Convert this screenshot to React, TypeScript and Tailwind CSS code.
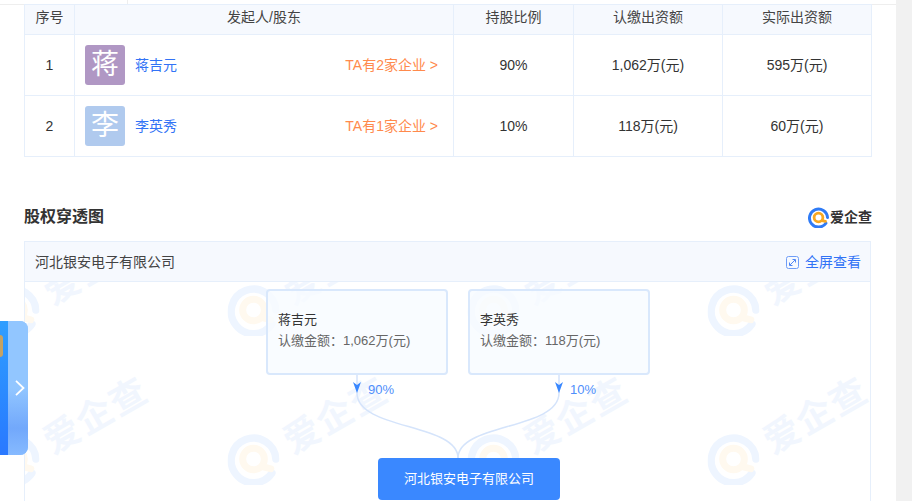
const FONT = "font-['Liberation_Sans','Noto_Sans_CJK_SC',sans-serif]";

function LogoMark({ size, faded }: { size: number; faded?: boolean }) {
  return (
    <svg width={size} height={size} viewBox="0 0 24 24" fill="none">
      <path d="M20.500 18.500A10.300 10.300 0 1 1 22.300 12" stroke={faded ? "#eef5ff" : "#2f7bf6"} strokeWidth="3.4" strokeLinecap="round" />
      <circle cx="12" cy="12" r="5" stroke={faded ? "#fff9ef" : "#f7a823"} strokeWidth="3.200" />
      <path d="M16 15.500L20 16.500" stroke={faded ? "#fff9ef" : "#f7a823"} strokeWidth="3.200" strokeLinecap="round" />
    </svg>
  );
}

function Watermark({ x, y }: { x: number; y: number }) {
  return (
    <div className="absolute flex items-center gap-[10px] -rotate-[30deg] origin-left" style={{ left: x, top: y }}>
      <div className="rotate-[30deg]">
        <LogoMark size={52} faded />
      </div>
      <span className="mt-[8px] text-[36px] leading-none font-bold text-[#f1f6fe] tracking-[2px] whitespace-nowrap">爱企查</span>
    </div>
  );
}

const rows = [
  { n: "1", ch: "蒋", name: "蒋吉元", color: "bg-[#b097c4]", ta: "TA有2家企业 >", pct: "90%", a: "1,062万(元)", b: "595万(元)" },
  { n: "2", ch: "李", name: "李英秀", color: "bg-[#b0caee]", ta: "TA有1家企业 >", pct: "10%", a: "118万(元)", b: "60万(元)" },
];

const marks = [
  [-12, 0], [228, 0], [468, 0], [708, 0],
  [-12, 149], [228, 149], [468, 149], [708, 149],
];

function Holder({ name, amount }: { name: string; amount: string }) {
  return (
    <div className="w-[182px] h-[86px] rounded-[4px] border-2 border-[#d9e8fc] bg-[#f8fbff]/80 pl-[10px] pt-[18px] text-[13px] text-[#333]">
      <div className="leading-[21px]">{name}</div>
      <div className="leading-[21px] text-[#666] whitespace-nowrap">认缴金额：{amount}</div>
    </div>
  );
}

export default function App() {
  const th = "border border-[#e6effb] bg-[#f6f9fe] font-normal text-[#444] h-[30px] pb-[4px]";
  const td = "border border-[#e6effb] text-center text-[#333]";
  return (
    <div className={`${FONT} relative w-[912px] h-[501px] overflow-hidden bg-white flex text-[14px]`}>
      <div className="w-[896px] h-full flex flex-col overflow-hidden">
        <div className="h-[5px] shrink-0 flex border-b border-[#eeeeee]">
          <div className="w-[128px] border-r border-[#eeeeee]" />
        </div>
        <div className="px-[24px]">
          <table className="w-[847px] table-fixed border-collapse -mt-px">
            <colgroup>
              <col className="w-[50px]" />
              <col className="w-[379px]" />
              <col className="w-[120px]" />
              <col className="w-[149px]" />
              <col className="w-[149px]" />
            </colgroup>
            <thead>
              <tr>
                <th className={th}>序号</th>
                <th className={th}>发起人/股东</th>
                <th className={th}>持股比例</th>
                <th className={th}>认缴出资额</th>
                <th className={th}>实际出资额</th>
              </tr>
            </thead>
            <tbody>
              {rows.map((r) => (
                <tr key={r.n} className="h-[61px]">
                  <td className={td}>{r.n}</td>
                  <td className="border border-[#e6effb] pl-[10px] pr-[15px]">
                    <div className="flex items-center">
                      <div className={`${r.color} w-[40px] h-[40px] rounded-[3px] flex items-center justify-center text-white text-[28px]`}>{r.ch}</div>
                      <span className="ml-[10px] text-[#3273f6]">{r.name}</span>
                      <span className="ml-auto text-[#ff8a4c]">{r.ta}</span>
                    </div>
                  </td>
                  <td className={td}>{r.pct}</td>
                  <td className={td}>{r.a}</td>
                  <td className={td}>{r.b}</td>
                </tr>
              ))}
            </tbody>
          </table>

          <div className="flex items-center justify-between mt-[48px] h-[24px]">
            <h2 className="text-[16px] font-bold text-[#333]">股权穿透图</h2>
            <div className="flex items-center gap-[1px]">
              <LogoMark size={21} />
              <span className="text-[14px] font-bold text-[#333]">爱企查</span>
            </div>
          </div>

          <div className="mt-[12px] w-[847px] h-[300px] border border-[#e6effb]">
            <div className="h-[40px] bg-[#f6f9fe] border-b border-[#e6effb] flex items-center justify-between pl-[10px] pr-[9px] pt-[1px]">
              <span className="text-[#444]">河北银安电子有限公司</span>
              <div className="flex items-center gap-[6px] text-[#3273f6]">
                <svg width="13" height="13" viewBox="0 0 13 13" fill="none" stroke="#4f86f5" strokeWidth="1">
                  <rect x="0.5" y="0.5" width="12" height="12" rx="2" stroke="#6f9df7" />
                  <path d="M4 9L9 4M6.500 3.500H9.500V6.500M3.500 6.500V9.500H6.500" />
                </svg>
                全屏查看
              </div>
            </div>
            <div className="relative h-[258px] overflow-hidden pt-[7px]">
              {marks.map(([x, y]) => (
                <Watermark key={`${x}-${y}`} x={x - 22} y={y + 15} />
              ))}
              <div className="relative flex gap-[20px] pl-[241px]">
                <Holder name="蒋吉元" amount="1,062万(元)" />
                <Holder name="李英秀" amount="118万(元)" />
              </div>
              <div className="relative h-[83px] ml-[235px] w-[400px]">
                <svg width="400" height="83" viewBox="0 0 400 83" fill="none" className="absolute left-0 top-0">
                  <path d="M97 0V18C97 55 198 48 198 83" stroke="#d5e4fb" strokeWidth="1.500" />
                  <path d="M299 0V18C299 55 198 48 198 83" stroke="#d5e4fb" strokeWidth="1.500" />
                  <path d="M93 7L97 10L101 7L97 18Z" fill="#3a88ff" />
                  <path d="M295 7L299 10L303 7L299 18Z" fill="#3a88ff" />
                </svg>
                <span className="absolute left-[108px] top-[7px] text-[13px] leading-[15px] text-[#4f8ffb]">90%</span>
                <span className="absolute left-[310px] top-[7px] text-[13px] leading-[15px] text-[#4f8ffb]">10%</span>
              </div>
              <div className="relative ml-[353px] w-[182px] h-[42px] rounded-[4px] bg-[#3a88ff] text-white text-[13px] flex items-center justify-center">
                河北银安电子有限公司
              </div>
            </div>
          </div>
        </div>
      </div>
      <div className="w-[16px] h-full bg-[#f1f1f1]" />

      <div className="absolute left-0 top-[321px] w-[28px] h-[134px] rounded-r-[8px] overflow-hidden flex bg-[#8fc5ff]">
        <div className="relative w-[8px] h-full bg-gradient-to-b from-[#2f9eff] to-[#2a78ff]">
          <div className="absolute left-0 top-[14px] w-[3px] h-[22px] rounded-r-[3px] bg-[#c5a263]" />
        </div>
        <div className="relative flex-1 bg-gradient-to-b from-[#92c6ff] from-50% via-[#72a8fb] via-80% to-[#86baff] flex items-center justify-center">
          <svg width="10" height="16" viewBox="0 0 10 16" fill="none" className="ml-[3px]">
            <path d="M1 0.800L8.500 8L1 15.200" stroke="white" strokeWidth="1.800" />
          </svg>
        </div>
      </div>
    </div>
  );
}
